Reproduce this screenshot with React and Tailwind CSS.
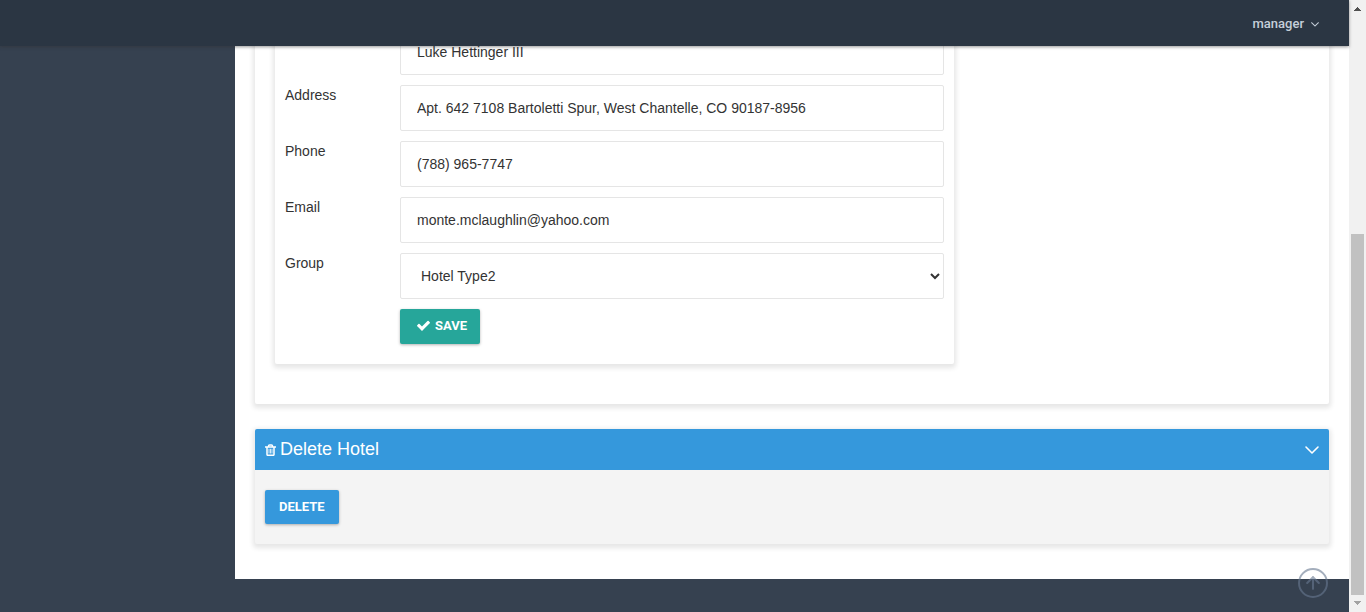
import { ArrowUp, ChevronDown } from 'lucide-react';

const fields = [
  { id: 'name', label: '', value: 'Luke Hettinger III', type: 'text' },
  { id: 'address', label: 'Address', value: 'Apt. 642 7108 Bartoletti Spur, West Chantelle, CO 90187-8956', type: 'text' },
  { id: 'phone', label: 'Phone', value: '(788) 965-7747', type: 'tel' },
  { id: 'email', label: 'Email', value: 'monte.mclaughlin@yahoo.com', type: 'email' },
];

const control =
  'h-[46px] w-full rounded-[2px] border border-[#e5e5e5] bg-white px-4 text-sm text-[#333] outline-none focus:border-[#999]';
const cardShadow = 'shadow-[0_2px_5px_2px_rgba(0,0,0,0.1)]';
const buttonText =
  "font-['Roboto',sans-serif] text-[13px] leading-5 font-bold text-white uppercase shadow-[0_1px_3px_rgba(0,0,0,0.3)]";

function TrashIcon() {
  return (
    <svg viewBox="0 0 11 12" className="mt-[2px] h-3 w-[11px]" fill="none" stroke="currentColor" aria-hidden="true">
      <path d="M0 3h11M3.500 2.500v-.500q0-1 1-1h2q1 0 1 1v.500M2 3v7.500q0 .800.800.800h5.400q.800 0 .800-.800v-7.500" strokeWidth="1.500" />
      <path d="M4 4.800v4.700M5.500 4.800v4.700M7 4.800v4.700" strokeWidth="0.800" />
    </svg>
  );
}

function CheckIcon() {
  return (
    <svg viewBox="0 0 1792 1792" className="size-[15px]" fill="currentColor" aria-hidden="true">
      <path d="M1671 566q0 40-28 68l-724 724-136 136q-28 28-68 28t-68-28l-136-136-362-362q-28-28-28-68t28-68l136-136q28-28 68-28t68 28l294 295 656-657q28-28 68-28t68 28l136 136q28 28 28 68z" />
    </svg>
  );
}

function AngleDownIcon() {
  return (
    <svg viewBox="0 0 1792 1792" className="size-[14px]" fill="currentColor" aria-hidden="true">
      <path d="M1395 736q0 13-10 23l-466 466q-10 10-23 10t-23-10l-466-466q-10-10-10-23t10-23l50-50q10-10 23-10t23 10l393 393 393-393q10-10 23-10t23 10l50 50q10 10 10 23z" />
    </svg>
  );
}

function Field({ id, label, children }) {
  return (
    <div className="flex">
      <label htmlFor={id} className="w-[115px] shrink-0 text-sm leading-5">
        {label}
      </label>
      <div className="min-w-0 flex-1">{children}</div>
    </div>
  );
}

function Scrollbar() {
  return (
    <div className="flex w-[17px] shrink-0 flex-col items-center bg-[#f1f1f1]" aria-hidden="true">
      <svg viewBox="0 0 17 17" className="h-[17px] w-[17px]" shapeRendering="crispEdges">
        <path d="M5 11h7L8.500 7z" fill="#505050" />
      </svg>
      <div className="w-[13px] grow-[217]" />
      <div className="w-[13px] grow-[361] bg-[#c1c1c1]" />
      <svg viewBox="0 0 17 17" className="h-[17px] w-[17px]" shapeRendering="crispEdges">
        <path d="M5 6h7l-3.500 4z" fill="#a3a3a3" />
      </svg>
    </div>
  );
}

export default function App() {
  return (
    <div className="flex h-screen overflow-hidden bg-[#364150] font-['Liberation_Sans',Arial,sans-serif] text-[#333]">
      <div className="relative flex min-w-0 flex-1 flex-col">
        <header className="z-10 flex h-[46px] shrink-0 items-center justify-end bg-[#2b3643] pt-[2px] pr-[27px] shadow-[0_1px_3px_rgba(50,50,50,0.5)]">
          <button type="button" className="flex items-center gap-1 font-['Roboto',sans-serif] text-[13px] font-medium text-[#c6cfda]">
            manager
            <AngleDownIcon />
          </button>
        </header>

        <div className="flex min-h-0 flex-1">
          <aside className="w-[235px] shrink-0 bg-[#364150]" />
          <main className="flex min-w-0 flex-1 flex-col justify-end overflow-hidden bg-white px-5 pb-[35px]">
            <section className={`shrink-0 rounded-[2px] bg-white px-5 pt-10 pb-10 ${cardShadow}`}>
              <form
                className={`flex w-[679px] max-w-full flex-col gap-[10px] rounded-[2px] bg-white px-[10px] pt-5 pb-5 ${cardShadow}`}
                onSubmit={(e) => e.preventDefault()}
              >
                {fields.map((f) => (
                  <Field key={f.id} id={f.id} label={f.label}>
                    <input
                      id={f.id}
                      type={f.type}
                      defaultValue={f.value}
                      aria-label={f.label ? undefined : 'Name'}
                      className={control}
                    />
                  </Field>
                ))}
                <Field id="group" label="Group">
                  <select id="group" className="h-[46px] w-full rounded-[2px] border border-[#e5e5e5] bg-white pl-4 text-sm text-[#333]">
                    <option>Hotel Type2</option>
                  </select>
                </Field>
                <div className="flex pl-[115px]">
                  <button
                    type="submit"
                    className={`flex h-[35px] items-center gap-1 rounded-[2px] bg-[#26a69a] pr-[13px] pb-[2px] pl-4 ${buttonText}`}
                  >
                    <CheckIcon />
                    Save
                  </button>
                </div>
              </form>
            </section>

            <section className={`mt-[25px] shrink-0 rounded-[2px] bg-[#f4f4f4] ${cardShadow}`}>
              <div className="flex h-[41px] items-center justify-between rounded-t-[2px] bg-[#3598dc] px-[10px] text-white">
                <h2 className="flex items-center gap-1 pb-[2px] text-lg leading-6">
                  <TrashIcon />
                  Delete Hotel
                </h2>
                <button type="button" aria-label="Collapse">
                  <ChevronDown className="-mr-[5px] size-6" strokeWidth={1.6} />
                </button>
              </div>
              <div className="flex px-[10px] py-5">
                <button type="button" className={`h-[34px] rounded-[2px] bg-[#3598dc] px-[14px] ${buttonText}`}>
                  Delete
                </button>
              </div>
            </section>
          </main>
        </div>

        <footer className="h-[33px] shrink-0 bg-[#364150]" />

        <button
          type="button"
          aria-label="Scroll to top"
          className="absolute right-[21px] bottom-[14px] z-20 flex size-[30px] items-center justify-center rounded-full border-2 border-[#687991] text-[#687991] opacity-60"
        >
          <ArrowUp className="size-5 shrink-0" strokeWidth={2.5} />
        </button>
      </div>
      <Scrollbar />
    </div>
  );
}
